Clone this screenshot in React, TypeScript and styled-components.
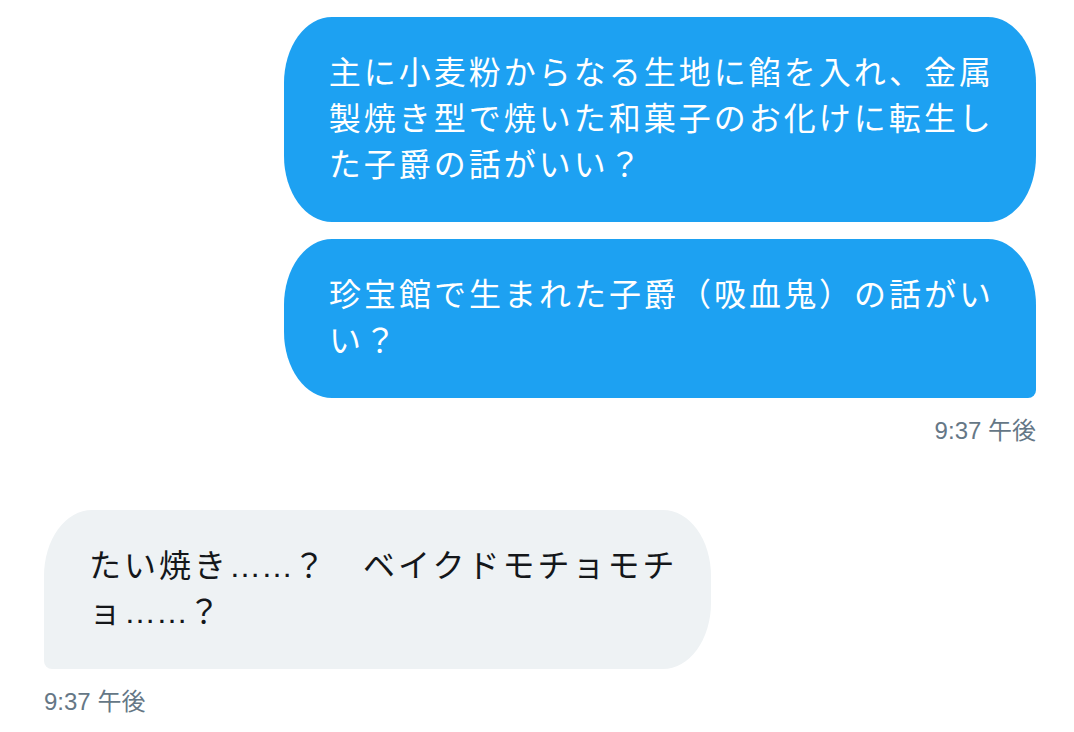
import React from "react";
import styled, { createGlobalStyle, css } from "styled-components";

type Side = "out" | "in";

const GlobalStyle = createGlobalStyle`
  html, body {
    margin: 0;
    padding: 0;
    background: #ffffff;
  }
  body {
    font-family: "Liberation Sans", "Noto Sans CJK JP", sans-serif;
    -webkit-font-smoothing: antialiased;
  }
`;

const Page = styled.main`
  box-sizing: border-box;
  width: 1074px;
  min-height: 732px;
  padding: 17px 38px 0 44px;
  display: flex;
  flex-direction: column;
  gap: 66px;
`;

const Group = styled.section<{ $side: Side }>`
  display: flex;
  flex-direction: column;
  align-items: ${(p) => (p.$side === "out" ? "flex-end" : "flex-start")};
  gap: 17px;
`;

const Bubble = styled.div<{ $side: Side; $tail?: boolean }>`
  box-sizing: border-box;
  padding: 33px 42px 34px 45px;
  font-size: 32px;
  line-height: 46px;
  letter-spacing: 3px;
  white-space: nowrap;
  border-radius: 48px / 66px;
  ${(p) =>
    p.$side === "out"
      ? css`
          background: #1da1f2;
          color: #ffffff;
        `
      : css`
          background: #eef2f4;
          color: #14171a;
          padding-right: 34px;
        `}
  ${(p) =>
    p.$tail &&
    (p.$side === "out"
      ? css`
          border-bottom-right-radius: 8px;
        `
      : css`
          border-bottom-left-radius: 8px;
        `)}
`;

const Line = styled.span`
  display: block;
`;

const Dots = styled.span`
  letter-spacing: 0;
`;

const Time = styled.div`
  margin-top: 3px;
  font-size: 24px;
  line-height: 26px;
  color: #657786;
`;

export default function App() {
  return (
    <>
      <GlobalStyle />
      <Page>
        <Group $side="out">
          <Bubble $side="out">
            <Line>主に小麦粉からなる生地に餡を入れ、金属</Line>
            <Line>製焼き型で焼いた和菓子のお化けに転生し</Line>
            <Line>た子爵の話がいい？</Line>
          </Bubble>
          <Bubble $side="out" $tail>
            <Line>珍宝館で生まれた子爵（吸血鬼）の話がい</Line>
            <Line>い？</Line>
          </Bubble>
          <Time>9:37 午後</Time>
        </Group>
        <Group $side="in">
          <Bubble $side="in" $tail>
            <Line>
              たい焼き<Dots>……</Dots>？　ベイクドモチョモチ
            </Line>
            <Line>
              ョ<Dots>……</Dots>？
            </Line>
          </Bubble>
          <Time>9:37 午後</Time>
        </Group>
      </Page>
    </>
  );
}
